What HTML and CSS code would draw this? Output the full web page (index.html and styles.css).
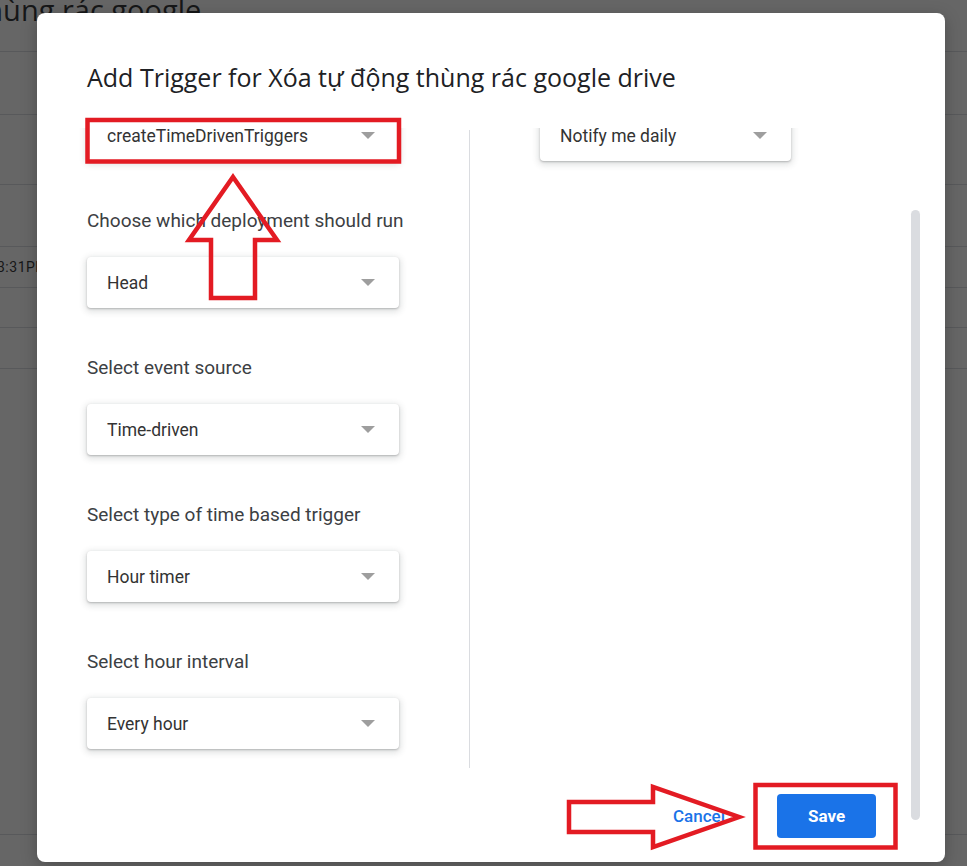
FILE: index.html
```html
<!DOCTYPE html>
<html>
<head>
  <title>Add Trigger</title>
  <link rel="stylesheet" href="styles.css">
</head>
<body>
  <div class="page">
    <div class="page-title"><span>thùng rác google</span></div>
    <div class="row r1"></div>
    <div class="row r2"></div>
    <div class="row r3"></div>
    <div class="row r4"><span class="row-time">3:31PM</span></div>
    <div class="row r5"></div>
    <div class="row r6"></div>
    <div class="row r7"></div>
  </div>

  <div class="dialog">
    <h2 class="dialog-title">Add Trigger for Xóa tự động thùng rác google drive</h2>

    <div class="dialog-body">
      <div class="columns">
        <div class="col col-left">
          <div class="select">createTimeDrivenTriggers<span class="caret"></span></div>

          <div class="field-label">Choose which deployment should run</div>
          <div class="select">Head<span class="caret"></span></div>

          <div class="field-label">Select event source</div>
          <div class="select">Time-driven<span class="caret"></span></div>

          <div class="field-label">Select type of time based trigger</div>
          <div class="select">Hour timer<span class="caret"></span></div>

          <div class="field-label">Select hour interval</div>
          <div class="select">Every hour<span class="caret"></span></div>
        </div>
        <div class="divider"></div>
        <div class="col col-right">
          <div class="select">Notify me daily<span class="caret"></span></div>
        </div>
      </div>
    </div>

    <div class="dialog-footer">
      <button class="btn-text">Cancel</button>
      <button class="btn-primary">Save</button>
    </div>

    <div class="scroll-thumb"></div>
  </div>

  <!-- red annotation marks drawn over the screenshot -->
  <svg class="marks" width="967" height="866" viewBox="0 0 967 866">
    <rect x="87.5" y="120" width="311.5" height="41.5" />
    <rect x="755.5" y="785" width="140" height="62.5" />
    <polygon points="233,177 277,240 255,240 255,298 211,298 211,240 189,240" />
    <polygon points="569,802 653,802 653,787 739,817 653,847 653,832 569,832" />
  </svg>
</body>
</html>
```

FILE: styles.css
```css
html, body {
  margin: 0;
  height: 100%;
}
body {
  font-family: Roboto, "Noto Sans", Arial, sans-serif;
  background-color: #666666;
  overflow: hidden;
  position: relative;
}

/* page behind the dimmed overlay */
.page {
  color: #161718;
}
.page-title {
  border-bottom: 1px solid #58595b;
  box-sizing: border-box;
  font-family: "Open Sans", Roboto, sans-serif;
  font-size: 29px;
  line-height: 30px;
  padding-top: 4px;
  margin-top: -9px;
  height: 61px;
  white-space: nowrap;
}
.page-title span {
  margin-left: -25px;
}
.row {
  border-bottom: 1px solid #58595b;
  box-sizing: border-box;
}
.r1 { height: 63px; }
.r2 { height: 70px; }
.r3 { height: 62px; }
.r4 { height: 41px; display: flex; align-items: center; }
.r5 { height: 40px; }
.r6 { height: 41px; }
.r7 { height: 466px; }
.row-time {
  font-size: 14px;
  margin-left: -3px;
  letter-spacing: 0.5px;
}

/* dialog */
.dialog {
  position: absolute;
  left: 37px;
  top: 13px;
  width: 908px;
  height: 849px;
  background: #fff;
  border-radius: 8px;
  box-shadow: 0 4px 16px rgba(0, 0, 0, 0.25);
  display: flex;
  flex-direction: column;
}
.dialog-title {
  margin: 49px 0 0 50px;
  font-family: "Open Sans", Roboto, sans-serif;
  font-weight: 400;
  font-size: 25px;
  line-height: 30px;
  color: #202124;
}
.dialog-body {
  margin-top: 36px;
  height: 647px;
  overflow: hidden;
}
.columns {
  display: flex;
  margin-top: -18px;
  padding-left: 50px;
}
.col-left {
  width: 312px;
  padding-bottom: 19px;
}
.col-right {
  width: 251px;
}
.divider {
  width: 1px;
  background: #dadce0;
  margin: 20px 70px 0 70px;
}
.field-label {
  margin: 48px 0 24px;
  font-size: 19px;
  line-height: 24px;
  color: #3c4043;
  white-space: nowrap;
}
.select {
  height: 51px;
  box-sizing: border-box;
  padding: 0 24px 0 20px;
  display: flex;
  align-items: center;
  justify-content: space-between;
  background: #fff;
  border-radius: 4px;
  box-shadow: 0 1px 2px rgba(60, 64, 67, 0.3), 0 2px 6px 2px rgba(60, 64, 67, 0.15);
  font-size: 17.5px;
  color: #333;
}
.caret {
  width: 0;
  height: 0;
  border-left: 7px solid transparent;
  border-right: 7px solid transparent;
  border-top: 7px solid #9e9e9e;
}

.dialog-footer {
  display: flex;
  justify-content: flex-end;
  align-items: center;
  padding: 19px 69px 0 0;
}
.btn-text {
  background: none;
  border: none;
  font-family: inherit;
  font-size: 17px;
  font-weight: 500;
  color: #1a73e8;
  padding: 0 24px;
  height: 44px;
  margin-right: 28px;
}
.btn-primary {
  background: #1a73e8;
  border: none;
  border-radius: 4px;
  color: #fff;
  font-family: inherit;
  font-size: 17px;
  font-weight: 700;
  width: 99px;
  height: 44px;
}
.scroll-thumb {
  position: absolute;
  left: 874px;
  top: 197px;
  width: 9px;
  height: 610px;
  border-radius: 5px;
  background: #dadce0;
}

.marks {
  position: absolute;
  left: 0;
  top: 0;
}
.marks rect,
.marks polygon {
  fill: none;
  stroke: #e31b23;
  stroke-width: 4.5;
}
```
